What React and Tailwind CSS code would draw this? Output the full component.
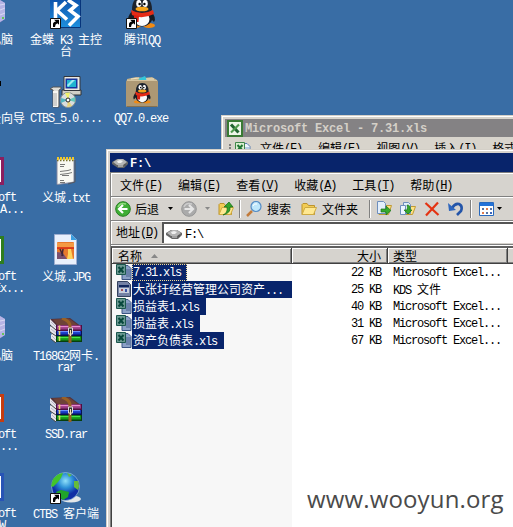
import React from "react";

// Latin runs use a fixed 6px advance (7px when bold) next to 12px CJK glyphs.
function T({ children, className = "", wide = false }) {
  const runs = children.match(/[\x00-\x7f]+|[^\x00-\x7f]+/g) || [];
  return (
    <span className={`block h-3 text-[12px] leading-[12px] whitespace-pre ${className}`}>
      {runs.map((run, i) =>
        run.charCodeAt(0) < 128 ? (
          <span key={i} className={`font-['Liberation_Mono',monospace] ${wide ? "tracking-[-0.2px]" : "tracking-[-1.2px]"}`}>{run}</span>
        ) : (
          <span key={i} className="font-['Noto_Sans_CJK_SC',sans-serif]">{run}</span>
        )
      )}
    </span>
  );
}

function Mnemonic({ label, k }) {
  return (
    <span className="flex h-3 whitespace-pre text-[12px] leading-[12px]">
      <T>{label}</T>
      <span className="pt-px font-['Liberation_Mono',monospace] tracking-[-1.2px]">
        (<u className="underline-offset-1">{k}</u>)
      </span>
    </span>
  );
}

const Shortcut = () => (
  <g>
    <path d="M0.5 21.5h10v10h-10z" fill="#fff" stroke="#111" />
    <path d="M3 30v-3q0-2 3-2.500L4 22.800h5v5l-1.500-1.500Q5 27 5 30z" fill="#000" />
  </g>
);

const K3Icon = () => (
  <svg width="32" height="32" viewBox="0 0 32 32">
    <defs><linearGradient id="k3" x2="0" y2="1"><stop stopColor="#0b4ea8" /><stop offset="1" stopColor="#1f91df" /></linearGradient></defs>
    <path d="M0 0h31v31H0z" fill="url(#k3)" />
    <path d="M30.500 0v30.500H0" stroke="#07357c" fill="none" />
    <path d="M5.500 5v16M16 5L7 13.500l10 9M18 3l8 5.500-6 5 8 6-9 9" stroke="#fff" strokeWidth="3.600" fill="none" />
    <Shortcut />
  </svg>
);

const Penguin = () => (
  <g>
    <ellipse cx="9" cy="28.500" rx="6" ry="2.500" fill="#f28a12" />
    <ellipse cx="23" cy="28.500" rx="6" ry="2.500" fill="#f28a12" />
    <path d="M6 14Q0 21 3 25l4-4M25 14q6 7 3 11l-4-4" fill="#171c25" />
    <ellipse cx="16" cy="20" rx="10.500" ry="9.500" fill="#171c25" />
    <ellipse cx="16" cy="22" rx="7.500" ry="7" fill="#fbfbfb" />
    <path d="M6 13Q6 0 16 0t10 13q-3 4-10 4T6 13" fill="#1d232d" />
    <ellipse cx="12.800" cy="6.500" rx="2.600" ry="3.600" fill="#fff" />
    <ellipse cx="19.200" cy="6.500" rx="2.600" ry="3.600" fill="#fff" />
    <circle cx="13.600" cy="7" r="1.200" /><circle cx="18.400" cy="7" r="1.200" />
    <ellipse cx="16" cy="12" rx="6.500" ry="2.300" fill="#f7a51b" />
    <path d="M5 13q11 6 22 0l1 4q-12 6-22 1z" fill="#e52b16" />
    <path d="M8 18l5 1-.5 6H8z" fill="#d71f12" />
  </g>
);

const QQIcon = () => (
  <svg width="32" height="32" viewBox="0 0 32 32"><Penguin /><Shortcut /></svg>
);

const QQBoxIcon = () => (
  <svg width="32" height="32" viewBox="0 0 32 32">
    <path d="M1 3l9-2 8 1 8-1 5 3v4H1z" fill="#c6b38b" />
    <path d="M12 3l7-3 2 4-5 1z" fill="#35c6d8" />
    <path d="M5 3l8-1M20 3l8 0" stroke="#eee3c4" />
    <rect y="4" width="32" height="27" rx="1.500" fill="#ad9874" />
    <path d="M1 4.500h30" stroke="#d4c39f" /><path d="M1 30.500h30" stroke="#857150" />
    <g transform="translate(6 7) scale(.64 .66)"><Penguin /></g>
  </svg>
);

const SetupIcon = () => (
  <svg width="32" height="32" viewBox="0 0 32 32">
    <path d="M12 14h19v5H12z" fill="#d2d0c8" stroke="#333" />
    <path d="M14 .5h16v14H14z" fill="#eceae2" stroke="#33363c" />
    <path d="M15.500 2.500h12v10h-12z" fill="#1736a0" />
    <path d="M17 4h9v7h-9z" fill="#20b4d0" /><path d="M17 9l5-5h3l-7 7z" fill="#9cecf1" />
    <path d="M0 13l3-2h8v2l-2 1v17H3V14z" fill="#deded9" stroke="#555" />
    <path d="M3 15h5v16H3z" fill="#f7f7f3" /><path d="M4 17v13M6 17v13" stroke="#aaa" />
    <circle cx="18" cy="24" r="7.500" fill="#d9dddd" stroke="#86908f" />
    <path d="M18 24l-3-7 5-.5z" fill="#eff16c" /><path d="M18 24l7-3v5z" fill="#67c9bb" />
    <path d="M18 24l4 6-5 1z" fill="#e9d47a" /><path d="M18 24l-7 3v-5z" fill="#53b6c2" />
    <circle cx="18" cy="24" r="2" fill="#fff" stroke="#222" />
  </svg>
);

const TxtIcon = () => (
  <svg width="20" height="28" viewBox="0 0 20 28">
    <path d="M1 2h17v23l-6 1-11 1.500z" fill="#f8f8f2" stroke="#8589a0" />
    <path d="M19 3v22l-7 2" stroke="#55585e" fill="none" />
    <path d="M1 3.500h18" stroke="#77712d" strokeWidth="1.500" strokeDasharray="1.500 1.500" />
    <path d="M1 1.500h18" stroke="#efc829" strokeWidth="3" strokeDasharray="2 1" />
    <path d="M4 7.500h5M4 9.500h4M4 14.500l8-1 3-1M4 17.500l8-1 4-1M6 18.500h7M4 23.500h4M4 25.500h5" stroke="#555" strokeWidth=".8" fill="none" />
  </svg>
);

const JpgIcon = () => (
  <svg width="24" height="31" viewBox="0 0 24 31">
    <path d="M.5.500h17l5 5v25H.5z" fill="#e9f0fc" stroke="#9eaed0" />
    <path d="M17 0v6h6z" fill="#3c9fe0" />
    <rect x="3" y="8" width="17" height="17" rx="1" fill="#e8792c" />
    <path d="M3 9h17v5H3z" fill="#f49a44" /><path d="M3 14h17" stroke="#d42310" strokeWidth="1.500" />
    <path d="M3 18l6 1 4 6H3z" fill="#795070" /><path d="M14 15h3l2 10h-6l1-5z" fill="#ffd35c" />
    <path d="M6 15l3 7M9 15l-1 7" stroke="#432536" strokeWidth="1.500" />
  </svg>
);

const Book = ({ y, dark, mid, light }) => (
  <g transform={`translate(0 ${y})`}>
    <path d="M5 1h27v6H6l-2-3z" fill={dark} /><path d="M7 1.500h24v4H7z" fill={mid} />
    <path d="M8 2.500h22" stroke={light} strokeWidth="1.300" /><path d="M9.500 1.500v4.500" stroke="#e8d36a" strokeWidth="1.600" />
  </g>
);

const RarIcon = () => (
  <svg width="32" height="25" viewBox="0 0 32 25">
    <path d="M0 1l20-1 12 9-5 2H6z" fill="#54323a" /><path d="M3 1.500l16-1 10 7.500-20 1z" fill="#6e4238" />
    <Book y={17} dark="#073f0c" mid="#149817" light="#49e54a" />
    <Book y={11} dark="#071150" mid="#1638c3" light="#668cff" />
    <Book y={6} dark="#4e1040" mid="#9c3b84" light="#e98bd0" />
    <path d="M0 1l6 6v18l-5-4v-4l1-1-2-3v-4l1-1-1-2z" fill="#e6e5ec" />
    <path d="M0 7l6 5M0 14l6 4M1 21l5 4" stroke="#444" /><path d="M1 4l5 5M1 11l5 4M2 18l4 4" stroke="#a7a7bb" strokeWidth=".7" />
    <path d="M12 0q8 3 8 8v17" stroke="#986026" strokeWidth="3" fill="none" />
    <path d="M18.500 10h4v6h-4z" fill="#333" stroke="#ddd" />
    <path d="M20.500 12v6" stroke="#f2e5b0" />
  </svg>
);

const GlobeIcon = () => (
  <svg width="32" height="32" viewBox="0 0 32 32">
    <defs><radialGradient id="gl" cx=".5" cy=".3"><stop stopColor="#91e1fa" /><stop offset=".5" stopColor="#2d91d7" /><stop offset="1" stopColor="#102fa5" /></radialGradient></defs>
    <ellipse cx="21" cy="27" rx="10" ry="3.500" fill="#e3e7e8" />
    <circle cx="15.500" cy="14.500" r="14" fill="url(#gl)" stroke="#acd5e3" strokeWidth=".6" />
    <path d="M3 7q5-6 10-6l-2 5-3 4-5 5-2-1z" fill="#43c42b" />
    <path d="M6 20l5-2 8 2-1 5-5 3-5-4z" fill="#20a52a" />
    <path d="M24 9l4 0q2 5 0 9l-4-3zM17 1l5 2-3 2z" fill="#67bc38" />
    <Shortcut />
  </svg>
);

const ComputerIcon = () => (
  <svg width="14" height="24" viewBox="0 0 14 24">
    <path d="M0 0h8l5 3v16l-7 5H0z" fill="#8784c6" /><path d="M8 0l5 3v16l-5 3z" fill="#b6b4e5" />
    <path d="M0 5h8l5-1M0 10h8l5-2M0 15h8l5-2" stroke="#d9d9f3" fill="none" /><path d="M10 18h2" stroke="#65c45a" strokeWidth="2" />
  </svg>
);

const Drive = () => (
  <svg width="16" height="16" viewBox="0 0 16 16">
    <path d="M0 7l5-3h6l5 3v2l-4 4H6L0 9z" fill="#666" /><path d="M1 7l5-3h5l4 3-4 3H5z" fill="#b5b5b5" />
    <path d="M5 6l3-1 3 1-2 2H6z" fill="#efefef" /><path d="M6 11h5" stroke="#ddd" /><path d="M12 10h2" stroke="#4b4b4b" />
  </svg>
);

const XlsFile = ({ selected = true }) => (
  <svg width="16" height="16" viewBox="0 0 16 16">
    <path d="M6 1.500h6l3 3v11H6z" fill={selected ? "#8ba0c6" : "#eef4fc"} stroke={selected ? "#3b5484" : "#5b7fb0"} />
    <path d="M10 6h4M10 8h4M10 10h4M10 12h4" stroke={selected ? "#48638d" : "#79a1c9"} />
    <path d="M.5.500h9v10h-9z" fill={selected ? "#6b9891" : "#d9edd0"} stroke={selected ? "#1c584e" : "#40864a"} />
    <path d="M2.500 3l5 5.500M7.500 3l-5 5.500" stroke={selected ? "#07473c" : "#1f7633"} strokeWidth="2" />
  </svg>
);

const KdsFile = () => (
  <svg width="14" height="16" viewBox="0 0 14 16" className="ml-px">
    <path d="M.5.500h10l3 3v12H.5z" fill="#7481a4" stroke="#35425f" /><path d="M2 4h10v8H2z" fill="#c9cfdd" />
    <path d="M2 4h10v2.500H2z" fill="#11275d" /><path d="M4 8h2v2H4z" fill="#a34f58" /><path d="M8 8h2v3H8z" fill="#3953a9" />
  </svg>
);

const ExcelLogo = () => (
  <svg width="16" height="17" viewBox="0 0 16 17">
    <path d="M1 1h14v15H1z" fill="#edf6e8" stroke="#397a34" strokeWidth="2" />
    <path d="M4 4.500l7.500 8" stroke="#20642f" strokeWidth="3" /><path d="M12 4.500l-8 8" stroke="#4f9b4d" strokeWidth="2.200" />
  </svg>
);

const Round = ({ on }) => (
  <svg width="16" height="16" viewBox="0 0 16 16">
    <circle cx="8" cy="8" r="7.300" fill={on ? "#3fae35" : "#aaa"} stroke={on ? "#267f22" : "#969696"} />
    <path d="M3 6q2-5 8-3" stroke={on ? "#8fdb7c" : "#ccc"} strokeWidth="1.500" fill="none" />
    <path d={on ? "M12.500 8H4.500M8 4L4 8l4 4" : "M3.500 8h8M8 4l4 4-4 4"} stroke={on ? "#fff" : "#e6e6e6"} strokeWidth="2.200" fill="none" />
  </svg>
);

const Caret = ({ className = "text-black" }) => (
  <svg width="5" height="3" viewBox="0 0 5 3" className={className}><path d="M0 0h5L2.500 3z" fill="currentColor" /></svg>
);

const Folder = ({ kind }) => (
  <svg width="16" height="16" viewBox="0 0 16 16">
    <path d="M1 3.500l1-1h4l1.500 2h6v9H1z" fill="#f2cc55" stroke="#bd932c" />
    <path d="M1 13.500l3-7h11.500l-3 7z" fill="#ffe891" stroke="#ceaa42" />
    {kind === "up" && <path d="M5 14q5-2 4-8H6l5-5 4 5h-3q1 6-7 8" fill="#34a42b" stroke="#146b18" strokeWidth=".7" />}
  </svg>
);

const SearchIcon = () => (
  <svg width="16" height="16" viewBox="0 0 16 16">
    <path d="M6 10l-5 5" stroke="#c27b3b" strokeWidth="2.500" /><circle cx="10" cy="5.500" r="5" fill="#bee7fb" stroke="#568dc5" strokeWidth="1.200" />
    <path d="M7 5q1-3 4-2" stroke="#fff" fill="none" />
  </svg>
);

const MoveIcon = ({ copy }) => (
  <svg width="16" height="16" viewBox="0 0 16 16">
    <path d={copy ? "M6 5.500h9.500l-3 8H5z" : "M3 4.500h12.500l-3 9H3z"} fill="#ffe383" stroke="#c09a35" />
    <path d={copy ? "M3.500 1.500h5l2 2v9h-7z" : "M1.500.500h6l2 2v10h-8z"} fill="#e3effb" stroke="#6e8fbd" />
    {copy && <path d="M.5 4.500h5v9h-5z" fill="#edf6ff" stroke="#6e8fbd" />}
    <path d={copy ? "M7 4q4 0 3 5h2l-4 4-4-4h3q1-3 0-5" : "M5 8h5V5l5 4.500-5 4.500v-3H5z"} fill="#37aa2d" stroke="#187319" strokeWidth=".7" />
  </svg>
);

const DeleteIcon = () => (
  <svg width="16" height="16" viewBox="0 0 16 16"><path d="M1.500 2l13 12M14 1.500L2 14.500" stroke="#e43312" strokeWidth="2.200" /></svg>
);
const UndoIcon = () => (
  <svg width="16" height="16" viewBox="0 0 16 16">
    <path d="M4 7q3-5 7-4 4 2 2 7l-4 4" stroke="#2455a9" strokeWidth="2.600" fill="none" /><path d="M0 2l1 8 7-1z" fill="#2e66bd" />
  </svg>
);
const ViewIcon = () => (
  <svg width="16" height="14" viewBox="0 0 16 14">
    <path d="M.5.500h14v13H.5z" fill="#fff" stroke="#2869bd" /><path d="M1 1h13v3H1z" fill="#2372d8" />
    <path d="M3 6h2v2H3zM11 6h2v2h-2zM7 10h2v2H7z" fill="#5874a3" /><path d="M7 6h2v2H7zM3 10h2v2H3z" fill="#e07b4c" /><path d="M11 10h2v2h-2z" fill="#3c65bc" />
  </svg>
);

const Sep = ({ className = "" }) => <div className={`h-[18px] w-[2px] border-l border-[#808080] bg-white ${className}`} />;

const labels = [
  ["left-[-35px] top-[33px]", "我的电脑"],
  ["left-[30px] top-[33px]", "金蝶 K3 主控"],
  ["left-[60px] top-[45px]", "台"],
  ["left-[124px] top-[33px]", "腾讯QQ"],
  ["left-[-23px] top-[112px]", "安全向导"],
  ["left-[30px] top-[112px]", "CTBS_5.0...."],
  ["left-[114px] top-[112px]", "QQ7.0.exe"],
  ["left-[-38px] top-[191px]", "Microsoft"],
  ["left-[-42px] top-[203px]", "Office A..."],
  ["left-[42px] top-[191px]", "义城.txt"],
  ["left-[-38px] top-[270px]", "Microsoft"],
  ["left-[-48px] top-[282px]", "Office Ex..."],
  ["left-[42px] top-[270px]", "义城.JPG"],
  ["left-[-35px] top-[349px]", "我的电脑"],
  ["left-[33px] top-[349px]", "T168G2网卡."],
  ["left-[57px] top-[361px]", "rar"],
  ["left-[-38px] top-[428px]", "Microsoft"],
  ["left-[-42px] top-[440px]", "Office ..."],
  ["left-[45px] top-[428px]", "SSD.rar"],
  ["left-[-38px] top-[507px]", "Microsoft"],
  ["left-[-43px] top-[519px]", "Office W..."],
  ["left-[33px] top-[507px]", "CTBS 客户端"],
];

const tiles = [
  "top-[157px] border-[#8c1f5f]",
  "top-[236px] border-[#2e7d1f]",
  "top-[394px] border-[#c63d10]",
  "top-[473px] border-[#2854b5]",
];

const icons = [
  ["left-[-8px] top-0", <ComputerIcon />],
  ["left-[50px] top-[-3px]", <K3Icon />],
  ["left-[126px] top-[-3px]", <QQIcon />],
  ["left-[50px] top-[76px]", <SetupIcon />],
  ["left-[126px] top-[76px]", <QQBoxIcon />],
  ["left-[56px] top-[157px]", <TxtIcon />],
  ["left-[54px] top-[234px]", <JpgIcon />],
  ["left-[-8px] top-[316px]", <ComputerIcon />],
  ["left-[50px] top-[318px]", <RarIcon />],
  ["left-[50px] top-[397px]", <RarIcon />],
  ["left-[50px] top-[472px]", <GlobeIcon />],
];

const files = [
  ["7.31.xls", "22 KB", "Microsoft Excel...", "w-[55px] outline outline-1 -outline-offset-1 outline-dotted outline-[#f5db95]"],
  ["大张圩经营管理公司资产...", "25 KB", "KDS 文件", "w-[160px]"],
  ["损益表1.xls", "40 KB", "Microsoft Excel...", "w-[74px]"],
  ["损益表.xls", "31 KB", "Microsoft Excel...", "w-[68px]"],
  ["资产负债表.xls", "67 KB", "Microsoft Excel...", "w-[92px]"],
];

function ExcelWindow() {
  return (
    <div className="absolute top-[115px] left-[221px] h-[60px] w-[320px] border-t border-l border-[#d4d0c8] bg-[#d8d4cc] text-black">
      <div className="h-full border-t border-l border-white pt-[2px] pl-[2px]">
        <div className="flex h-[18px] items-center bg-[#848284] pl-[2px]">
          <ExcelLogo />
          <T wide className="ml-[2px] font-bold text-[#d4d0c8]">Microsoft Excel - 7.31.xls</T>
        </div>
        <div className="flex h-6 pt-[5px]">
          <div className="mt-[2px] mr-1 ml-1 w-[2px] border-l-2 border-dotted border-[#808080]" />
          <XlsFile selected={false} />
          <div className="ml-[9px] flex gap-4">
            <Mnemonic label="文件" k="F" /><Mnemonic label="编辑" k="E" /><Mnemonic label="视图" k="V" />
            <Mnemonic label="插入" k="I" /><Mnemonic label="格式" k="O" />
          </div>
        </div>
      </div>
    </div>
  );
}

function ExplorerWindow() {
  return (
    <div className="absolute top-[149px] left-[106px] h-[400px] w-[440px] border-t border-l border-[#d4d0c8] bg-[#d6d3ce] text-black">
      <div className="h-full border-t border-l border-white pt-[2px] pl-[2px]">
        <div className="flex h-[19px] items-center bg-[#08246b] pl-[2px] text-white">
          <Drive />
          <T wide className="ml-[2px] font-bold">F:\</T>
        </div>
        <div className="border-l border-[#808080]">
          <div className="flex h-6 items-center gap-4 border-t border-[#808080] pl-[9px] shadow-[inset_1px_1px_0_#fff]">
            <Mnemonic label="文件" k="F" /><Mnemonic label="编辑" k="E" /><Mnemonic label="查看" k="V" />
            <Mnemonic label="收藏" k="A" /><Mnemonic label="工具" k="T" /><Mnemonic label="帮助" k="H" />
          </div>
          <div className="flex h-6 items-center border-t border-[#808080] pl-1 shadow-[inset_1px_1px_0_#fff]">
            <Round on />
            <T className="ml-1">后退</T>
            <Caret className="ml-[9px] text-black" />
            <span className="ml-2"><Round /></span>
            <Caret className="ml-2 text-[#888]" />
            <span className="ml-[8px]"><Folder kind="up" /></span>
            <Sep className="ml-[5px]" />
            <span className="ml-[5px]"><SearchIcon /></span>
            <T className="ml-[5px]">搜索</T>
            <span className="ml-[10px]"><Folder /></span>
            <T className="ml-[5px]">文件夹</T>
            <Sep className="ml-[11px]" />
            <span className="ml-[5px]"><MoveIcon /></span>
            <span className="ml-2"><MoveIcon copy /></span>
            <span className="ml-2"><DeleteIcon /></span>
            <span className="ml-2"><UndoIcon /></span>
            <Sep className="ml-[6px]" />
            <span className="ml-[7px]"><ViewIcon /></span>
            <Caret className="ml-[2px] text-black" />
          </div>
          <div className="flex h-6 items-center border-t border-[#808080] pl-[5px] shadow-[inset_1px_1px_0_#fff]">
            <div className="pb-[2px]"><Mnemonic label="地址" k="D" /></div>
            <div className="ml-[4px] flex h-[21px] flex-1 items-center border-t-2 border-l-2 border-t-[#555] border-l-[#555] bg-white pl-[2px]">
              <Drive />
              <T className="ml-[3px]">F:\</T>
            </div>
          </div>
          <div className="h-[2px] border-t border-[#808080] bg-white" />
          <div className="border-t-2 border-l border-t-[#606060] border-l-[#404040] bg-white">
            <div className="flex h-4 border-b border-[#404040] bg-[#d6d3ce] shadow-[inset_0_1px_0_#fff,inset_0_-1px_0_#808080]">
              <div className="flex w-[180px] items-center border-r border-[#404040] pl-[6px] shadow-[inset_1px_1px_0_#fff,inset_-1px_-1px_0_#808080]">
                <T>名称</T>
                <svg width="7" height="4" viewBox="0 0 7 4" className="ml-[9px]"><path d="M0 4h7L3.500 0z" fill="#888" /></svg>
              </div>
              <div className="flex w-[96px] items-center justify-end border-r border-[#404040] pr-[6px] shadow-[inset_1px_1px_0_#fff,inset_-1px_-1px_0_#808080]"><T>大小</T></div>
              <div className="flex w-[120px] items-center border-r border-[#404040] pl-[5px] shadow-[inset_1px_1px_0_#fff,inset_-1px_-1px_0_#808080]"><T>类型</T></div>
            </div>
            <div className="flex h-[290px]">
              <div className="w-[180px] bg-[#f7f7f7]">
                {files.map(([name, , , w], i) => (
                  <div key={name} className="flex h-[17px] items-start pl-1">
                    <span className="flex w-4">{i === 1 ? <KdsFile /> : <XlsFile />}</span>
                    <div className={`flex h-[17px] shrink-0 items-start bg-[#08246b] pt-[2px] pl-[1px] text-white ${w}`}><T>{name}</T></div>
                  </div>
                ))}
              </div>
              <div className="w-[89px]">
                {files.map(([name, size]) => (
                  <div key={name} className="flex h-[17px] items-start justify-end pt-[2px]"><T>{size}</T></div>
                ))}
              </div>
              <div className="pl-[12px]">
                {files.map(([name, , type]) => (
                  <div key={name} className="flex h-[17px] items-start pt-[2px]"><T>{type}</T></div>
                ))}
              </div>
            </div>
          </div>
        </div>
      </div>
    </div>
  );
}

export default function App() {
  return (
    <div className="relative h-[527px] w-[513px] overflow-hidden bg-[#396da5] text-white [&_svg]:block [&_svg]:shrink-0">
      {icons.map(([pos, icon], i) => <div key={i} className={`absolute ${pos}`}>{icon}</div>)}
      {tiles.map((t) => (
        <div key={t} className={`absolute left-[-24px] h-7 w-7 border-[3px] bg-white ${t}`} />
      ))}
      <div className="absolute top-[81px] left-0 h-[5px] w-px bg-black" />
      {labels.map(([pos, text]) => <div key={pos} className={`absolute ${pos}`}><T>{text}</T></div>)}
      <ExcelWindow />
      <ExplorerWindow />
      <div className="absolute top-[484px] left-[307px] font-['Open_Sans',sans-serif] text-[24px] leading-[30px] tracking-[0.15px] text-[#4a4a4a]">www.wooyun.org</div>
    </div>
  );
}
